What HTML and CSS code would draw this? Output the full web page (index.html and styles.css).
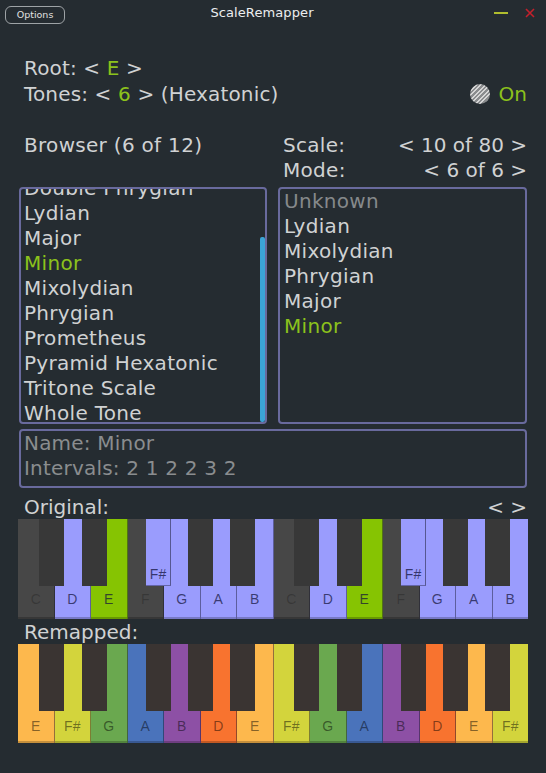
FILE: index.html
```html
<!DOCTYPE html>
<html>
<head>
<meta charset="utf-8">
<title>ScaleRemapper</title>
<link rel="stylesheet" href="styles.css">
</head>
<body>
<div class="app">
  <header class="titlebar">
    <div class="tb-left"><button class="options">Options</button></div>
    <div class="tb-title">ScaleRemapper</div>
    <div class="tb-right">
      <span class="minimize"></span>
      <svg class="close" width="10" height="10" viewBox="0 0 10 10"><path d="M1 1L9 9M9 1L1 9" stroke="#c4202c" stroke-width="1.6"/></svg>
    </div>
  </header>

  <section class="params">
    <div class="param-lines">
      <div class="line">Root: &lt; <span class="hl">E</span> &gt;</div>
      <div class="line">Tones: &lt; <span class="hl">6</span> &gt; (Hexatonic)</div>
    </div>
    <div class="toggle"><span class="knob"></span><span class="hl">On</span></div>
  </section>

  <section class="heads">
    <div class="head-left">Browser (6 of 12)</div>
    <div class="head-right">
      <div class="hrow"><span>Scale:</span><span class="val">&lt; 10 of 80 &gt;</span></div>
      <div class="hrow"><span>Mode:</span><span class="val">&lt; 6 of 6 &gt;</span></div>
    </div>
  </section>

  <section class="lists">
    <div class="box list browser">
      <ul class="items scrolled">
        <li>Double Phrygian</li>
        <li>Lydian</li>
        <li>Major</li>
        <li class="hl">Minor</li>
        <li>Mixolydian</li>
        <li>Phrygian</li>
        <li>Prometheus</li>
        <li>Pyramid Hexatonic</li>
        <li>Tritone Scale</li>
        <li>Whole Tone</li>
      </ul>
      <div class="scrollbar"></div>
    </div>
    <div class="box list modes">
      <ul class="items">
        <li class="dim">Unknown</li>
        <li>Lydian</li>
        <li>Mixolydian</li>
        <li>Phrygian</li>
        <li>Major</li>
        <li class="hl">Minor</li>
      </ul>
    </div>
  </section>

  <section class="box info">
    <div>Name: Minor</div>
    <div>Intervals: 2 1 2 2 3 2</div>
  </section>

  <div class="kb-label first"><span>Original:</span><span>&lt; &gt;</span></div>
  <div class="keyboard original">
    <div class="wk off"><span>C</span></div>
    <div class="wk blue"><span>D</span></div>
    <div class="wk green"><span>E</span></div>
    <div class="wk off"><span>F</span></div>
    <div class="wk blue"><span>G</span></div>
    <div class="wk blue"><span>A</span></div>
    <div class="wk blue"><span>B</span></div>
    <div class="wk off"><span>C</span></div>
    <div class="wk blue"><span>D</span></div>
    <div class="wk green"><span>E</span></div>
    <div class="wk off"><span>F</span></div>
    <div class="wk blue"><span>G</span></div>
    <div class="wk blue"><span>A</span></div>
    <div class="wk blue last"><span>B</span></div>
    <div class="bk b1"></div>
    <div class="bk b2"></div>
    <div class="bk b3 blue"><span>F#</span></div>
    <div class="bk b4"></div>
    <div class="bk b5"></div>
    <div class="bk b6"></div>
    <div class="bk b7"></div>
    <div class="bk b8 blue"><span>F#</span></div>
    <div class="bk b9"></div>
    <div class="bk b10"></div>
  </div>

  <div class="kb-label second"><span>Remapped:</span></div>
  <div class="keyboard remapped">
    <div class="wk c-e"><span>E</span></div>
    <div class="wk c-fs"><span>F#</span></div>
    <div class="wk c-g"><span>G</span></div>
    <div class="wk c-a"><span>A</span></div>
    <div class="wk c-b"><span>B</span></div>
    <div class="wk c-d"><span>D</span></div>
    <div class="wk c-e"><span>E</span></div>
    <div class="wk c-fs"><span>F#</span></div>
    <div class="wk c-g"><span>G</span></div>
    <div class="wk c-a"><span>A</span></div>
    <div class="wk c-b"><span>B</span></div>
    <div class="wk c-d"><span>D</span></div>
    <div class="wk c-e"><span>E</span></div>
    <div class="wk c-fs last"><span>F#</span></div>
    <div class="bk b1"></div>
    <div class="bk b2"></div>
    <div class="bk b3"></div>
    <div class="bk b4"></div>
    <div class="bk b5"></div>
    <div class="bk b6"></div>
    <div class="bk b7"></div>
    <div class="bk b8"></div>
    <div class="bk b9"></div>
    <div class="bk b10"></div>
  </div>
</div>
</body>
</html>
```

FILE: styles.css
```css
* { box-sizing: border-box; }
html, body { margin: 0; padding: 0; }
body {
  background: #252c31;
  color: #d0d2d3;
  font-family: "DejaVu Sans", Verdana, sans-serif;
  width: 546px;
  height: 773px;
  overflow: hidden;
}
.app { width: 546px; }

/* title bar */
.titlebar {
  height: 25px;
  display: grid;
  grid-template-columns: 1fr auto 1fr;
  align-items: center;
}
.tb-left { padding-left: 5px; padding-top: 1px; }
.options {
  width: 60px;
  height: 18px;
  background: transparent;
  border: 1px solid #9ea3a6;
  border-radius: 6px;
  color: #e0e0e0;
  font-family: "DejaVu Sans", sans-serif;
  font-size: 9.5px;
  padding: 0;
  line-height: 16px;
}
.tb-title {
  font-size: 13px;
  color: #eceeef;
  letter-spacing: 0.1px;
  margin-right: 22px;
}
.tb-right {
  display: flex;
  justify-content: flex-end;
  align-items: center;
  gap: 17px;
  padding-right: 11px;
}
.minimize {
  display: block;
  width: 14px;
  height: 2px;
  background: #b0bd2e;
}
.close { display: block; }

/* root / tones */
.params {
  margin-top: 30px;
  padding: 0 19px 0 24px;
  display: flex;
  justify-content: space-between;
  align-items: flex-end;
}
.line {
  font-size: 20px;
  line-height: 26px;
  letter-spacing: 0.15px;
}
.hl { color: #8cc21c; }
.toggle {
  display: flex;
  align-items: center;
  gap: 9px;
  font-size: 20px;
  line-height: 26px;
}
.knob {
  display: block;
  width: 20px;
  height: 20px;
  border-radius: 50%;
  background: repeating-linear-gradient(-45deg, #d6d6d6 0 1.6px, #8a8c8e 1.6px 3.2px);
}

/* headers */
.heads {
  margin-top: 26px;
  display: flex;
  padding: 0 19px 0 24px;
  font-size: 20px;
  line-height: 25px;
  letter-spacing: 0.3px;
}
.head-left { width: 259px; }
.head-right { flex: 1; }
.hrow {
  display: flex;
  justify-content: space-between;
}
.val { letter-spacing: 0; }

/* lists */
.lists {
  margin: 4px 19px 0 19px;
  display: flex;
  gap: 11px;
}
.box {
  border: 2px solid #696a9d;
  border-radius: 4px;
}
.list {
  height: 237px;
  overflow: hidden;
  position: relative;
  font-size: 20px;
  line-height: 25px;
  letter-spacing: 0.3px;
}
.browser { width: 248px; }
.modes { flex: 1; }
.items {
  list-style: none;
  margin: 0;
  padding: 0 0 0 3px;
}
.scrolled { margin-top: -13px; }
.modes .items { margin-top: 0; padding-left: 4px; }
.dim { color: #85898b; }
.scrollbar {
  position: absolute;
  right: 0;
  top: 48px;
  bottom: 0;
  width: 5px;
  background: #3ba4d6;
  border-radius: 2px;
}

/* info */
.info {
  margin: 5px 19px 0 19px;
  height: 59px;
  padding: 0 0 0 3px;
  color: #8a8d8f;
  font-size: 20px;
  line-height: 25px;
  letter-spacing: 0.2px;
}
.info > div:first-child { margin-top: 0; }

/* keyboard labels */
.kb-label {
  display: flex;
  justify-content: space-between;
  padding: 0 19px 0 24px;
  font-size: 20px;
  line-height: 22px;
}
.kb-label.first { margin-top: 8px; }
.kb-label.second { margin-top: 2px; }

/* keyboards */
.keyboard {
  position: relative;
  display: flex;
  margin: 1px 18px 0 18px;
  height: 100px;
  font-family: "Liberation Sans", Arial, sans-serif;
  font-size: 14px;
}
.keyboard.remapped { margin-top: 1px; height: 99px; }
.wk {
  flex: 1;
  display: flex;
  align-items: flex-end;
  justify-content: center;
  border-right: 1px solid rgba(20, 20, 40, 0.45);
  box-shadow: inset 0 -2px 0 rgba(0, 0, 0, 0.22);
  padding-bottom: 12px;
}
.wk.last { border-right: none; }
.original .wk span { color: rgba(20, 20, 60, 0.72); }
.original .wk.off span { color: rgba(0, 0, 0, 0.22); }
.remapped .wk span { color: rgba(0, 0, 0, 0.48); }
.remapped .wk { padding-bottom: 9px; }

.wk.off { background: #474747; }
.wk.blue { background: #9a9cfd; }
.wk.green { background: #86c402; }

.c-e { background: #fdb84d; }
.c-fs { background: #d3d43c; }
.c-g { background: #6aa84f; }
.c-a { background: #4a73bb; }
.c-b { background: #8d50a5; }
.c-d { background: #f8732f; }

.bk {
  position: absolute;
  top: 0;
  width: 25px;
  height: 67px;
  background: #383838;
  display: flex;
  align-items: flex-end;
  justify-content: center;
  padding-bottom: 3px;
}
.remapped .bk { background: #3a3432; }
.bk.blue {
  background: #9a9cfd;
  border-right: 1px solid rgba(20, 20, 40, 0.5);
  border-bottom: 1px solid rgba(20, 20, 40, 0.4);
}
.bk.blue span { color: rgba(20, 20, 60, 0.75); }
.b1 { left: 21px; }
.b2 { left: 64px; }
.b3 { left: 128px; }
.b4 { left: 170px; }
.b5 { left: 212px; }
.b6 { left: 276px; }
.b7 { left: 319px; }
.b8 { left: 383px; }
.b9 { left: 425px; }
.b10 { left: 467px; }
```
